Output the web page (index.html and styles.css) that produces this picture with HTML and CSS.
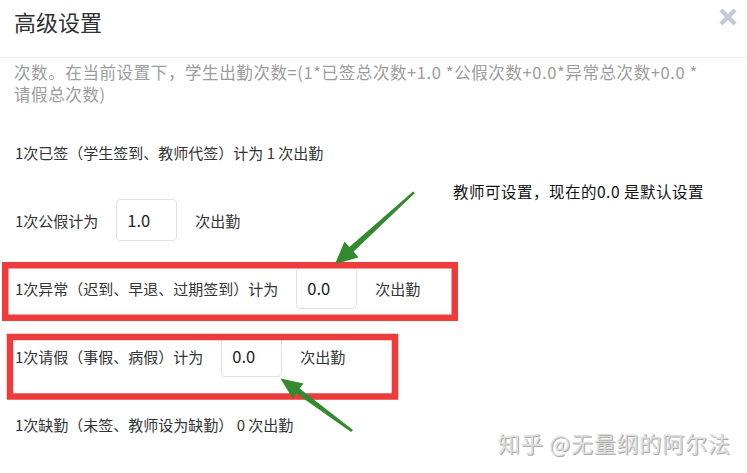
FILE: index.html
```html
<!DOCTYPE html>
<html lang="zh-CN">
<head>
<meta charset="utf-8">
<title>高级设置</title>
<link rel="stylesheet" href="styles.css">
</head>
<body>
<div class="dialog">
  <header class="head">
    <h1 class="title">高级设置</h1>
    <svg class="close" width="20" height="20" viewBox="0 0 20 20" aria-label="关闭">
      <path d="M3 3 L17 17 M17 3 L3 17" stroke="#c3cbd6" stroke-width="4.4" stroke-linecap="butt" fill="none"/>
    </svg>
  </header>
  <p class="desc">次数。在当前设置下，学生出勤次数=(1*已签总次数+1.0 *公假次数+0.0*异常总次数+0.0 *<br>请假总次数)</p>
  <div class="rows">
    <div class="row">1次已签（学生签到、教师代签）计为 1 次出勤</div>
    <div class="row"><span>1次公假计为</span><input class="num" type="text" value="1.0"><span>次出勤</span></div>
    <div class="row"><span>1次异常（迟到、早退、过期签到）计为</span><input class="num" type="text" value="0.0"><span>次出勤</span></div>
    <div class="row"><span>1次请假（事假、病假）计为</span><input class="num" type="text" value="0.0"><span>次出勤</span></div>
    <div class="row">1次缺勤（未签、教师设为缺勤） 0 次出勤</div>
  </div>

  <svg class="marks" width="747" height="473" viewBox="0 0 747 473">
    <rect x="5.25" y="265.25" width="449.5" height="52.5" fill="none" stroke="#ee3b3b" stroke-width="6.5"/>
    <rect x="10" y="337" width="385" height="59.5" fill="none" stroke="#ee3b3b" stroke-width="6.5"/>
    <polygon fill="#348b2f" points="413,191.5 415,193 353.6,251.6 358.5,257.5 335,264 344.5,241.5 349.4,247"/>
    <polygon fill="#348b2f" points="351,432 353,430 299.6,388.5 303.5,383.5 280.5,378.5 292.5,398.5 296,393.3"/>
  </svg>
  <div class="note">教师可设置，现在的0.0 是默认设置</div>
  <div class="watermark">知乎 @无量纲的阿尔法</div>
</div>
</body>
</html>
```

FILE: styles.css
```css
html, body {
  margin: 0;
  padding: 0;
  background: #fff;
}
body {
  font-family: "Noto Sans CJK SC", "Noto Sans", sans-serif;
  color: #333;
}
.dialog {
  position: relative;
  width: 747px;
  height: 473px;
  overflow: hidden;
}
.head {
  display: flex;
  justify-content: space-between;
  align-items: flex-start;
  height: 57px;
  border-bottom: 1px solid #ededed;
  padding: 0 9px 0 14px;
}
.title {
  margin: 6px 0 0;
  font-size: 22px;
  line-height: 30px;
  font-weight: normal;
  color: #2f3133;
}
.close {
  margin-top: 7px;
}
.desc {
  margin: 0;
  padding: 3px 14px 0;
  font-size: 16.5px;
  line-height: 22px;
  color: #9c9c9c;
  letter-spacing: 0.6px;
}
.rows {
  display: flex;
  flex-direction: column;
  gap: 26px;
  margin-top: 26px;
  padding-left: 15px;
}
.row {
  display: flex;
  align-items: center;
  height: 42px;
  font-size: 15px;
  color: #333;
  white-space: pre;
}
.num {
  box-sizing: border-box;
  width: 61px;
  height: 42px;
  margin: 0 18px;
  padding: 0 0 0 10px;
  border: 1px solid #e0e2e6;
  border-radius: 4px;
  font-family: "Noto Sans CJK SC", "Noto Sans", sans-serif;
  font-size: 16.5px;
  color: #222;
  background: #fff;
  outline: none;
}
.marks {
  position: absolute;
  left: 0;
  top: 0;
  pointer-events: none;
}
.note {
  position: absolute;
  left: 453px;
  top: 181px;
  font-size: 15.5px;
  line-height: 21px;
  letter-spacing: 0.5px;
  color: #111;
}
.watermark {
  position: absolute;
  left: 498px;
  top: 428px;
  font-size: 22px;
  line-height: 28px;
  letter-spacing: 0.8px;
  color: #dedede;
  text-shadow: 1px 1px 0 #ababab, -1px -1px 0 #fcfcfc;
}
```
